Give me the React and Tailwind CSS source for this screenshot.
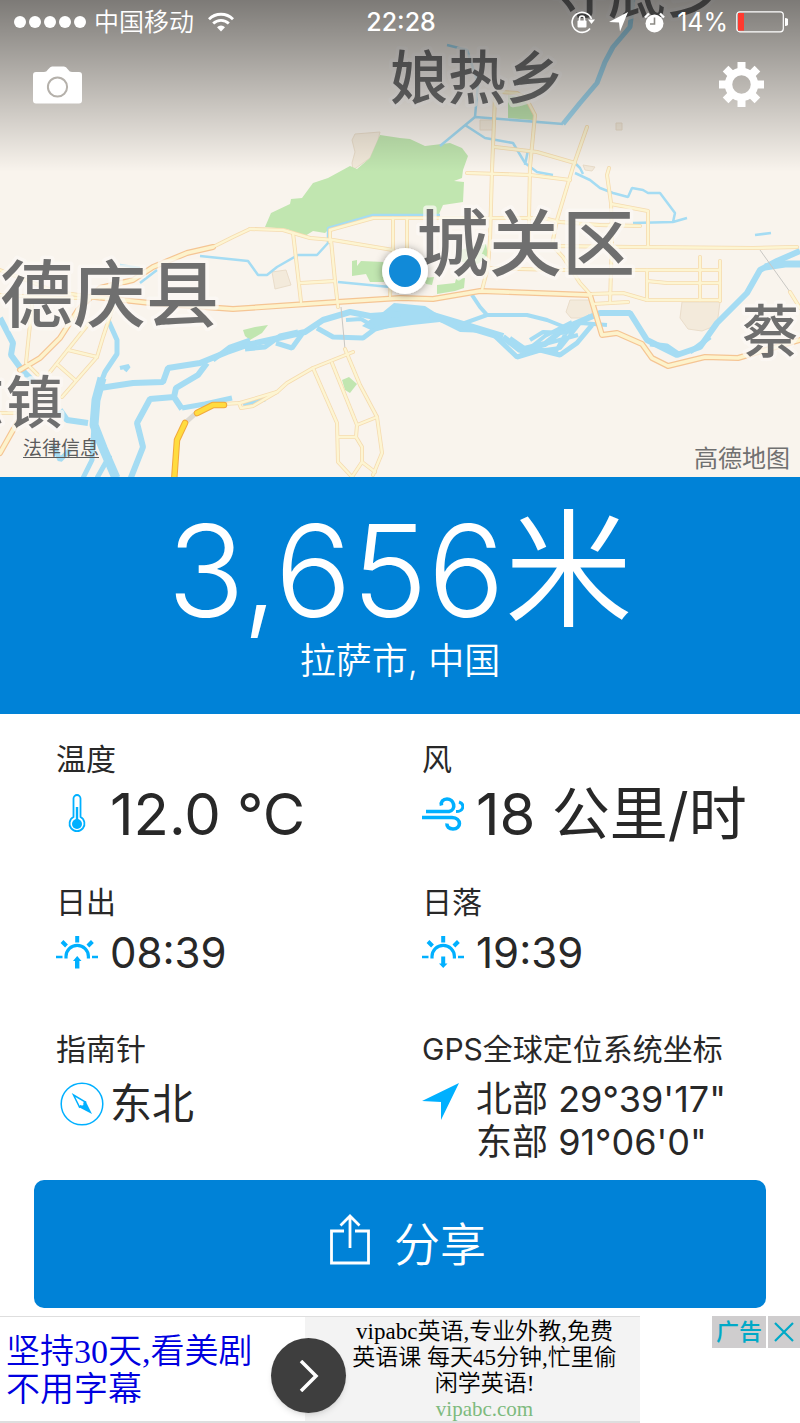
const roads = [
  "M0 270L57 292L100 298",
  "M0 295L60 298L100 298",
  "M250 229L283 230L310 238L333 240L393 250",
  "M213 247L233 237L250 229",
  "M330 242V230L373 218H543L560 222L600 225L640 226",
  "M293 233L297 267L301 302",
  "M331 240L335 281L338 307",
  "M301 283L335 281",
  "M393 218V250L390 296",
  "M407 218V252",
  "M495 97L492 170L490 240L488 267L482 290",
  "M500 92L517 93L526 98L535 115L530 167L529 217V240",
  "M495 147L537 152L575 163",
  "M467 173L530 175L570 180",
  "M587 127L573 167L557 220L552 245L563 257L580 283L590 294",
  "M609 168L607 175L611 203L612 240L610 302",
  "M611 204L648 211V247",
  "M550 246L633 247L753 248L797 247",
  "M483 268L560 270H720",
  "M647 270V300",
  "M647 281L667 283H720",
  "M700 257V300",
  "M720 261V301",
  "M590 294L623 293L647 300H720",
  "M593 304L628 302",
  "M790 292L800 308",
  "M353 352L313 368L287 383L277 392L240 403L223 404",
  "M277 392L253 406L241 408L239 403",
  "M345 349L360 385L377 417L382 453L373 475",
  "M313 368L337 423L338 462L353 478",
  "M332 363L357 425L356 437L362 447V462L352 477",
  "M362 462L375 472",
  "M338 437H356",
  "M357 425L377 417",
  "M113 307L103 337L97 357L62 397",
  "M90 322L50 372",
  "M68 350L97 357",
  "M58 365L75 380",
  "M32 305L26 363L38 375",
  "M0 413H15",
]

const mainRoads = [
  "M20 370L40 358L60 338L78 310L100 288L133 280L153 267L187 253L213 247",
  "M95 297L150 303L233 309L337 302L400 298L433 299L480 291L590 295L602 335L617 333L642 344L652 358L668 366L705 357L738 358L800 340",
  "M0 453L17 423",
]

const streams = [
  "M475 117L440 146M475 117L563 124",
  "M475 117L478 83L467 50L447 45",
  "M465 125L485 138L513 143L525 163L537 172L553 175M528 150L525 165",
  "M575 163L580 168L583 174M575 173L590 180L600 188L613 193L628 197L632 188L643 190L648 193L660 193L675 213L673 222L687 218M673 222L633 223",
  "M200 256L248 261L258 275H267L277 267L298 255H317L328 243V228L373 215L440 215",
  "M338 282L390 287",
  "M140 283L157 270M120 265L140 268",
  "M755 235L771 233",
]

const rivers = [
  { d: "M633 0L630 27L613 47L605 62L597 83L580 103L563 124", w: 5 },
  { d: "M0 318L13 343L11 355L22 370L35 383M60 410L67 420L88 423", w: 6 },
  { d: "M114 300L108 320L117 340V354L105 372L100 385", w: 5 },
  { d: "M102 378L96 400L94 425L103 448L116 478", w: 9 },
  { d: "M94 425L92 460L83 478M53 445L60 460L70 450M110 455L97 478", w: 5 },
  { d: "M100 388L133 383L163 382L168 368L200 363L227 352L247 345L283 337L305 332L323 320L350 312L370 316L400 314", w: 6 },
  { d: "M207 363L198 375L176 388L174 397L150 399L137 423L143 447L130 480M174 397L182 409", w: 6 },
  { d: "M182 408L205 404L232 398M243 404L265 399", w: 5 },
  { d: "M213 360L230 347L250 340M245 349L265 347L280 336L298 332M276 343L292 348L302 334", w: 5 },
  { d: "M317 328L333 337L363 338L375 329L400 322", w: 5 },
  { d: "M346 320L361 319L375 327", w: 4 },
  { d: "M472 295L480 307L488 316M462 324L487 315L527 315L547 320L567 328", w: 4 },
  { d: "M430 315L470 327L503 337", w: 8 },
  { d: "M495 336L517 357L540 350L560 355L577 343L592 325", w: 5 },
  { d: "M503 337L520 350L545 344L565 328L600 313H630L647 340L677 355L700 347L717 323L747 293L760 270L777 261L800 251", w: 6 },
  { d: "M510 338L530 352L560 348L580 323L607 325M530 340L543 332L567 333M545 344L578 335M520 356L545 336L572 322M555 353L566 333L590 316", w: 4 },
  { d: "M650 344L667 346L680 355M690 352L710 337", w: 5 },
  { d: "M765 267L785 264H800", w: 7 },
  { d: "M120 368L129 366L125 371", w: 4 },
]

const labels = [
  { text: "夺底乡", x: 550, y: 13, size: 58 },
  { text: "娘热乡", x: 390, y: 99, size: 58 },
  { text: "城关区", x: 416, y: 270, size: 73 },
  { text: "德庆县", x: 0, y: 321, size: 73 },
  { text: "镇", x: 6, y: 423, size: 57 },
  { text: "琼", x: -53, y: 423, size: 57 },
  { text: "蔡", x: 742, y: 352, size: 57 },
]

function MapCanvas() {
  return (
    <svg
      className="absolute inset-0 w-full h-full"
      viewBox="0 0 800 477"
      preserveAspectRatio="xMidYMid slice"
      role="img"
      aria-label="地图"
    >
      <defs>
        <linearGradient id="shade" x1="0" y1="0" x2="0" y2="1">
          <stop offset="0" stopColor="#000" stopOpacity="0.5" />
          <stop offset="1" stopColor="#000" stopOpacity="0" />
        </linearGradient>
        <filter id="pinShadow" x="-50%" y="-50%" width="200%" height="200%">
          <feDropShadow dx="0" dy="1" stdDeviation="4" floodOpacity="0.4" />
        </filter>
      </defs>
      <rect width="800" height="477" fill="#f9f4ed" />

      {/* Built-up areas */}
      <g fill="#f3eadb" stroke="#eaddca">
        <path d="M355 134L380 132L378 140L370 158L353 170L352 163L355 152L352 140Z" />
        <path d="M272 272L286 270L291 285L275 289Z" />
        <path d="M480 120H493V130H480Z" />
        <path d="M682 302H720L717 325L702 331L688 329L680 318Z" />
        <path d="M570 300H592V318H571L566 312Z" />
        <path d="M616 123H622V130H616Z" />
        <path d="M583 165L595 167L592 171L585 170Z" />
      </g>

      {/* Parks */}
      <g fill="#c1e6b0">
        <path d="M265 227L271 213L290 204L291 199L302 198L313 183L328 178L350 166L357 169L370 158L380 135L400 138L410 139L425 146L450 143L462 148L468 156L463 170L462 178L454 181L464 182L463 202L443 205L439 214L367 218L328 230L325 233L313 231L305 236L287 229Z" />
        <path d="M508 95L523 98L533 110V120L508 118Z" />
        <path d="M352 261L357 260V266L361 261L384 262V282H370L366 274L352 276Z" />
        <path d="M437 285L455 283L456 279L465 278L464 288L455 291L437 294Z" />
        <path d="M460 250L486 244L488 255L478 264L462 262Z" />
        <path d="M243 330L255 327L268 325L262 333L250 340L245 336Z" />
        <path d="M342 380L349 377L357 384L350 393L345 390Z" />
        <path d="M424 278L434 277L432 285L426 284Z" />
      </g>

      {/* Water */}
      <path
        d="M372 318L383 312L394 303L425 306L436 313L445 319L475 327L490 333L460 332L440 322L412 325L390 328L373 331L362 326Z"
        fill="#a5dcf3"
      />
      <g fill="none" stroke="#a5dcf3" strokeLinejoin="bevel">
        {rivers.map((r) => (
          <path key={r.d} d={r.d} strokeWidth={r.w} />
        ))}
        {streams.map((d) => (
          <path key={d} d={d} strokeWidth="2.5" />
        ))}
      </g>

      {/* Roads */}
      <path d="M341 307L345 349M760 250L790 292" stroke="#c9c7c3" fill="none" />
      <g fill="none" strokeLinejoin="round" strokeLinecap="round">
        {roads.map((d) => (
          <path key={d} d={d} stroke="#f5dbb0" strokeWidth="4" />
        ))}
        {mainRoads.map((d) => (
          <path key={d} d={d} stroke="#f5c594" strokeWidth="6" />
        ))}
        {roads.map((d) => (
          <path key={d} d={d} stroke="#fdf5d2" strokeWidth="2.4" />
        ))}
        {mainRoads.map((d) => (
          <path key={d} d={d} stroke="#fdf3cc" strokeWidth="3.6" />
        ))}
        <path d="M195 414L185 423" stroke="#dcd9d2" strokeWidth="5" />
        <path d="M224 405H213L197 413M185 423L177 440L174 482" stroke="#f2a93c" strokeWidth="6.5" />
        <path d="M224 405H213L197 413M185 423L177 440L174 482" stroke="#ffdc3f" strokeWidth="4.5" />
      </g>

      <g
        fill="#6f6f6f"
        stroke="#fbf8f4"
        strokeOpacity="0.75"
        strokeWidth="7"
        strokeLinejoin="round"
        paintOrder="stroke"
        fontFamily="Noto Sans CJK SC, sans-serif"
        fontWeight="500"
      >
        {labels.map((l) => (
          <text key={l.text} x={l.x} y={l.y} fontSize={l.size}>
            {l.text}
          </text>
        ))}
      </g>

      <rect width="800" height="172" fill="url(#shade)" />

      {/* Current position */}
      <circle cx="405" cy="271" r="23" fill="#fff" filter="url(#pinShadow)" />
      <circle cx="405" cy="271" r="16" fill="#118ad8" />
    </svg>
  )
}

function StatusBar() {
  return (
    <div className="relative grid grid-cols-[1fr_auto_1fr] items-center h-11 pl-3.5 pr-3 text-[25px] leading-none text-white">
      <div className="flex items-center gap-2">
        <div className="flex gap-[3px]">
          {[0, 1, 2, 3, 4].map((i) => (
            <span key={i} className="size-3 rounded-full bg-white" />
          ))}
        </div>
        <span className="font-[350]">中国移动</span>
        <svg className="w-[26px] h-5 ml-1.5" viewBox="0 0 26 20" fill="none" stroke="#fff" strokeWidth="2.8">
          <path d="M1 7.2a17 17 0 0 1 24 0M5.2 11.6a11 11 0 0 1 15.6 0" />
          <path d="M9 15.2a5.8 5.8 0 0 1 8 0L13 19.4z" fill="#fff" stroke="none" />
        </svg>
      </div>
      <span className="font-medium">22:28</span>
      <div className="flex items-center justify-end">
        <svg className="size-6 mr-3.5" viewBox="0 0 24 24" fill="none" stroke="#fff" strokeWidth="1.6">
          <path d="M20.5 9A10 10 0 1 0 19 18.500" />
          <path d="M17 9.500h7l-3.500 4.500z" fill="#fff" stroke="none" />
          <rect x="6.500" y="10.500" width="9" height="7" rx="1" fill="#fff" stroke="none" />
          <path d="M8.500 11V8.500a2.500 2.500 0 0 1 5 0V11" />
        </svg>
        <svg className="w-[19px] h-5 mr-4" viewBox="0 0 19 20" fill="#fff">
          <path d="M19 0L11 19.500L10 10.500L0 10z" />
        </svg>
        <svg className="size-[21px] mr-3" viewBox="0 0 21 21">
          <circle cx="10.500" cy="11.500" r="9" fill="#fff" />
          <path d="M1 5.500L5 1.500M16 1.500L20 5.500" stroke="#fff" strokeWidth="2.4" />
          <path d="M10.500 5.500V12H6" stroke="#8b8984" strokeWidth="1.6" fill="none" />
        </svg>
        <span>14%</span>
        <svg className="w-[52px] h-[22px] ml-2" viewBox="0 0 52 22">
          <rect x="0.800" y="0.800" width="46.500" height="20" rx="3" fill="none" stroke="#fff" strokeWidth="1.2" />
          <rect x="2" y="2" width="6" height="17.600" fill="#ff3a2f" />
          <path d="M49 7a4 4 0 0 1 0 8z" fill="#fff" />
        </svg>
      </div>
    </div>
  )
}

function ThermometerIcon() {
  return (
    <svg className="size-[42px]" viewBox="0 0 42 42" fill="none" stroke="#00b0ff">
      <path d="M17.500 24V5.500a3.500 3.500 0 0 1 7 0V24a7.500 7.500 0 1 1-7 0z" strokeWidth="1.8" />
      <path d="M21 14V28" strokeWidth="2.4" />
      <circle cx="21" cy="31" r="5" fill="#00b0ff" stroke="none" />
    </svg>
  )
}

function WindIcon() {
  return (
    <svg className="size-[42px]" viewBox="0 0 42 42" fill="none" stroke="#00b0ff" strokeWidth="3.600">
      <path d="M4 18.500H27C35 16.500 32 6 25 6C21 6 18.500 9 19.500 12.500" />
      <path d="M37 9C43 11 42 18.500 34 18.500" strokeWidth="3" />
      <path d="M0 24.500H30C40 25 39.500 36 31 36C27 36 24.500 33.500 25 30.500" />
    </svg>
  )
}

function SunIcon({ down }) {
  return (
    <svg className="size-[42px]" viewBox="0 0 42 42" fill="none" stroke="#00b0ff">
      <path d="M10 26.500V24.500a11.200 11.200 0 0 1 22.400 0V26.500" strokeWidth="3.200" />
      <path d="M0 25H6.500M36 25H42.500" strokeWidth="2.600" />
      <path d="M21.200 4V10.500M6 9.500L10.500 14M36.400 9.500L31.900 14" strokeWidth="4" />
      {down ? (
        <path d="M19.200 24.500H23.200V31.500H25.500L21.200 36L17 31.500H19.200Z" fill="#00b0ff" stroke="none" />
      ) : (
        <path d="M21.200 24L25.500 29H23.400V36.500H19V29H17Z" fill="#00b0ff" stroke="none" />
      )}
    </svg>
  )
}

function CompassIcon() {
  return (
    <svg className="w-[52px] h-[44px]" viewBox="0 0 52 44" fill="none" stroke="#00b0ff">
      <circle cx="26" cy="22" r="20.800" strokeWidth="1.500" />
      <path d="M17.500 13L29.500 20L23.500 25Z" strokeWidth="1.500" />
      <path d="M22.500 25L29.500 19L36 32Z" fill="#00b0ff" stroke="none" />
      <circle cx="26" cy="22" r="1.500" fill="#fff" stroke="none" />
    </svg>
  )
}

function LocationIcon() {
  return (
    <svg className="size-[42px] mb-1" viewBox="0 0 42 42" fill="#00b0ff">
      <path d="M37 2L19 39V21L0 20Z" />
    </svg>
  )
}

function Stat({ label, icon, children }) {
  return (
    <div className="pl-[22px]">
      <dt className="text-[30px] leading-[46px] whitespace-nowrap">{label}</dt>
      <dd className="flex items-start">
        <span className="w-[54px] shrink-0">{icon}</span>
        {children}
      </dd>
    </div>
  )
}

function Ad() {
  return (
    <aside className="flex items-start justify-between mt-2 font-['Liberation_Serif','Noto_Sans_CJK_SC',serif]">
      <a
        href="#ad"
        className="relative grid grid-cols-[305px_335px] h-[107px] border-t border-b-2 border-[#dedede]"
      >
        <span className="pl-1.5 pt-4 text-[34px] leading-[38px] font-[350] text-[#0000e0]">
          坚持30天,看美剧
          <br />
          不用字幕
        </span>
        <span className="flex flex-col items-center bg-[#f3f3f3] pt-0.5 pl-6 text-[23px] leading-[26px] text-black whitespace-nowrap font-[350]">
          <span>vipabc英语,专业外教,免费</span>
          <span>英语课 每天45分钟,忙里偷</span>
          <span>闲学英语!</span>
          <span className="text-[21px] leading-6 text-[#7dba7d]">vipabc.com</span>
        </span>
        <span className="absolute left-[271px] top-[21px] size-[75px] rounded-full bg-[#3e3e3e] shadow-md flex items-center justify-center">
          <svg className="w-5 h-8" viewBox="0 0 20 32" fill="none" stroke="#fff" strokeWidth="3.500">
            <path d="M2 1L17 16L2 31" />
          </svg>
        </span>
      </a>
      <div className="flex gap-0.5 font-['Noto_Sans_CJK_SC',sans-serif]">
        <a
          href="#ad-info"
          className="w-[54px] h-8 bg-[#cfcdce] text-[#00a9c7] text-[23px] leading-7 font-medium text-center"
        >
          广告
        </a>
        <button aria-label="关闭" className="w-8 h-8 bg-[#cfcdce] flex items-center justify-center">
          <svg className="size-5" viewBox="0 0 20 20" stroke="#00a9c7" strokeWidth="2.200">
            <path d="M1 1L19 19M19 1L1 19" />
          </svg>
        </button>
      </div>
    </aside>
  )
}

export default function App() {
  return (
    <main className="bg-white text-[#282828] overflow-hidden font-['Inter','Noto_Sans_CJK_SC',sans-serif]">
      <header className="relative flex flex-col h-[477px] overflow-hidden">
        <MapCanvas />
        <StatusBar />
        <div className="relative flex items-center justify-between pl-[33px] pr-9 pt-[18px]">
          <button aria-label="拍照">
            <svg className="w-[49px] h-[38px]" viewBox="0 0 49 38">
              <path
                d="M3 6H11Q13.500 6 15 3.500Q17.500 0.500 19 0.500H31Q33 0.500 35 3.500Q36.500 6 39 6H46Q49 6 49 9V34.500Q49 37.500 46 37.500H3Q0 37.500 0 34.500V9Q0 6 3 6Z"
                fill="#fff"
              />
              <circle cx="24.500" cy="21" r="9.600" fill="none" stroke="#b5b1ab" strokeWidth="2" />
            </svg>
          </button>
          <button aria-label="设置">
            <svg className="size-[45px]" viewBox="-22.500 -22.500 45 45">
              <circle r="13" fill="none" stroke="#fff" strokeWidth="7.500" />
              {[0, 45, 90, 135, 180, 225, 270, 315].map((a) => (
                <path key={a} d="M-4 -22.500H4V-14H-4Z" fill="#fff" transform={`rotate(${a})`} />
              ))}
            </svg>
          </button>
        </div>
        <div className="relative flex items-end justify-between mt-auto pl-[23px] pr-2.5 pb-0.5">
          <a href="#legal" className="pb-3 text-[19px] leading-7 text-[#5c5c5c] underline underline-offset-2">
            法律信息
          </a>
          <span className="text-[24px] leading-8 text-[#707070]">高德地图</span>
        </div>
      </header>

      <section className="h-[237px] bg-[#0082d7] text-white text-center flex flex-col items-center pt-[26px]">
        <h1 className="text-[128px] leading-[136px] font-[350]">3,656米</h1>
        <p className="text-[36px] leading-[44px] font-[350]">拉萨市, 中国</p>
      </section>

      <section className="px-[34px]">
        <dl className="grid grid-cols-2 pt-[22px]">
          <Stat label="温度" icon={<span className="flex h-16 items-center"><ThermometerIcon /></span>}>
            <span className="text-[58px] leading-[64px] whitespace-nowrap">12.0 °C</span>
          </Stat>
          <Stat label="风" icon={<span className="flex h-16 items-center"><WindIcon /></span>}>
            <span className="text-[58px] leading-[64px] whitespace-nowrap">18 公里/时</span>
          </Stat>
        </dl>
        <dl className="grid grid-cols-2 pt-[33px]">
          <Stat label="日出" icon={<span className="flex h-14 items-center"><SunIcon /></span>}>
            <span className="text-[42px] leading-[56px]">08:39</span>
          </Stat>
          <Stat label="日落" icon={<span className="flex h-14 items-center"><SunIcon down /></span>}>
            <span className="text-[42px] leading-[56px]">19:39</span>
          </Stat>
        </dl>
        <dl className="grid grid-cols-2 pt-[45px]">
          <Stat label="指南针" icon={<span className="flex h-16 items-center"><CompassIcon /></span>}>
            <span className="text-[42px] leading-[64px]">东北</span>
          </Stat>
          <Stat label="GPS全球定位系统坐标" icon={<span className="flex h-16 items-center"><LocationIcon /></span>}>
            <span className="pt-1.5 text-[36px] leading-[43px] whitespace-nowrap">
              北部 29°39'17"
              <br />
              东部 91°06'0"
            </span>
          </Stat>
        </dl>
        <button className="w-full h-[128px] mt-4 pl-4 rounded-[10px] bg-[#0082d7] text-white text-[46px] font-[350] flex items-center justify-center gap-6">
          <svg className="w-10 h-[52px] mb-2.5" viewBox="0 0 40 52" fill="none" stroke="#fff" strokeWidth="2.800">
            <path d="M14 18H1.500V50H38.500V18H25M20 35V3M10.500 12.500L20 3L29.500 12.500" />
          </svg>
          分享
        </button>
      </section>
      <Ad />
    </main>
  )
}
